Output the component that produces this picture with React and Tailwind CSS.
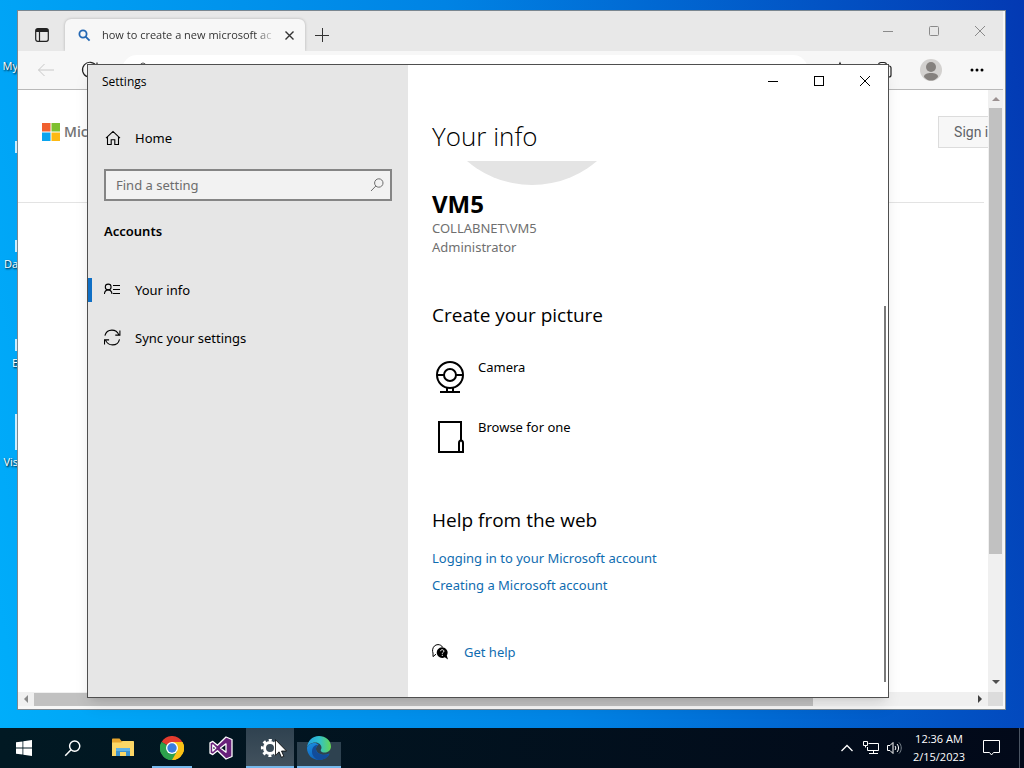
import { useState } from "react";
import clsx from "clsx";

const desktopIcons = [
  { label: "My", art: "" },
  { label: "", art: "h-3" },
  { label: "Da", art: "h-3" },
  { label: "E", art: "h-3" },
  { label: "Vis", art: "h-9" },
];

function Minimize() {
  return (
    <svg width="10" height="10" viewBox="0 0 10 10" stroke="currentColor" shapeRendering="crispEdges" aria-hidden="true">
      <path d="M0 5.5h10" />
    </svg>
  );
}

function Maximize({ radius = 0 }) {
  return (
    <svg width="10" height="10" viewBox="0 0 10 10" fill="none" stroke="currentColor" aria-hidden="true">
      <rect x=".5" y=".5" width="9" height="9" rx={radius} />
    </svg>
  );
}

function Close() {
  return (
    <svg width="10" height="10" viewBox="0 0 10 10" fill="none" stroke="currentColor" aria-hidden="true">
      <path d="M0 0l10 10M10 0L0 10" />
    </svg>
  );
}

function WindowControls({ className, radius }) {
  return (
    <div className={clsx("flex", className)}>
      <button type="button" aria-label="Minimize" className="grid h-full w-[46px] place-items-center">
        <Minimize />
      </button>
      <button type="button" aria-label="Maximize" className="grid h-full w-[46px] place-items-center">
        <Maximize radius={radius} />
      </button>
      <button type="button" aria-label="Close" className="grid h-full w-[46px] place-items-center">
        <Close />
      </button>
    </div>
  );
}

function HomeIcon() {
  return (
    <svg width="18" height="16" viewBox="0 0 18 16" fill="none" stroke="currentColor" strokeWidth="1.1" aria-hidden="true">
      <path d="M2 8.2L9 1.4l7 6.8M3.5 7v7.5h3.7V9.7h3.6v4.8h3.7V7" />
    </svg>
  );
}

function InfoIcon() {
  return (
    <svg width="18" height="16" viewBox="0 0 18 16" fill="none" stroke="currentColor" strokeWidth="1.1" aria-hidden="true">
      <circle cx="4.2" cy="5" r="2.900" />
      <path d="M.4 12c.3-2.600 1.700-4.100 3.800-4.100S7.700 9.400 8 12M9 3.500h7M9 7.500h7M9 11.500h7" />
    </svg>
  );
}

function SyncIcon() {
  return (
    <svg width="18" height="18" viewBox="0 0 18 18" fill="none" stroke="currentColor" strokeWidth="1.1" aria-hidden="true">
      <path d="M.9 6.700C1.700 3.300 4.500 1.100 7.900 1.100c3.200 0 5.800 1.900 7 4.800M15.900 1.500v4.600h-4.600M15.500 10.300c-.8 3.400-3.600 5.600-7 5.600-3.200 0-5.800-1.900-7-4.800M.5 15.500v-4.600h4.600" />
    </svg>
  );
}

function SearchGlass({ size = 14, strokeWidth = 1 }) {
  return (
    <svg width={size} height={size} viewBox="0 0 14 14" fill="none" stroke="currentColor" strokeWidth={strokeWidth} aria-hidden="true">
      <circle cx="8.800" cy="5" r="4.200" />
      <path d="M5.800 8L1 13" />
    </svg>
  );
}

function CameraIcon() {
  return (
    <svg width="36" height="40" viewBox="0 0 36 40" fill="none" stroke="currentColor" strokeWidth="2" aria-hidden="true">
      <circle cx="18" cy="18" r="13" />
      <circle cx="18" cy="18" r="6" />
      <path d="M5 18h7M24 18h7M15 31v4M21 31v4M8 35h20" />
    </svg>
  );
}

function BrowseIcon() {
  return (
    <svg width="36" height="40" viewBox="0 0 36 40" fill="none" stroke="currentColor" strokeWidth="2" aria-hidden="true">
      <path d="M29 24V5H7v30h20" />
      <path d="M27 35v-9c0-1.600.8-2.600 2-2.600s2 1 2 2.600v9z" />
    </svg>
  );
}

function HelpIcon() {
  return (
    <svg width="16" height="16" viewBox="0 0 16 16" fill="none" aria-hidden="true">
      <path d="M4 10.200L1 12.600V9C.6 8 .5 7 .6 5.800.9 2.800 3.200.6 6 .6c2 0 3.700 1 4.600 2.600" stroke="black" />
      <path d="M10.200 3.200a5.400 5.400 0 1 0 2.600 10.100L16 15.600l-1.200-4.200a5.400 5.400 0 0 0-4.600-8.200z" fill="black" />
      <path d="M8.500 7.200c.1-1 .8-1.500 1.700-1.500s1.700.6 1.700 1.500c0 1.200-1.600 1.200-1.600 2.500M10.300 10.800v1.100" stroke="white" />
    </svg>
  );
}

function Triangle({ className }) {
  return (
    <svg width="8" height="8" viewBox="0 0 8 8" fill="currentColor" className={className} aria-hidden="true">
      <path d="M0 6l4-4 4 4z" />
    </svg>
  );
}

function BrowserWindow() {
  return (
    <section aria-label="Browser" className="absolute top-2.5 right-[18px] bottom-[18px] left-[17px] flex flex-col border border-[#7b8790] bg-[#f7f7f7] pr-0.5 font-['Open_Sans',sans-serif]">
      <div className="flex h-10 shrink-0 items-end bg-[#e8e8e8]">
        <button type="button" aria-label="Tab actions" className="grid h-8 w-[47px] place-items-center text-[#222]">
          <svg width="14" height="14" viewBox="0 0 14 14" fill="none" stroke="currentColor" strokeWidth="1.200" aria-hidden="true">
            <rect x=".7" y=".7" width="12.600" height="12.600" rx="2" />
            <path d="M1 2.500h12" strokeWidth="3" />
            <path d="M4.500 3v10" />
          </svg>
        </button>
        <div className="flex h-8 w-60 items-center rounded-t-md bg-[#f7f7f7] pr-1 pl-3 shadow-[0_0_3px_rgba(0,0,0,0.25)] [clip-path:inset(-4px_-4px_0_-4px)]">
          <svg width="14" height="14" viewBox="0 0 14 14" fill="none" stroke="#2468b4" strokeWidth="1.800" className="shrink-0" aria-hidden="true">
            <circle cx="6" cy="6" r="3.600" />
            <path d="M8.600 8.600l4 4" />
          </svg>
          <span className="ml-[11px] w-[174px] overflow-hidden text-[11px] leading-4 whitespace-nowrap text-[#333] [mask-image:linear-gradient(to_right,black_88%,transparent)]">
            how to create a new microsoft ac
          </span>
          <button type="button" aria-label="Close tab" className="ml-auto grid size-6 shrink-0 place-items-center text-[#333]">
            <svg width="9" height="9" viewBox="0 0 9 9" stroke="currentColor" strokeWidth="1.400" aria-hidden="true">
              <path d="M.5.5l8 8M8.500.5l-8 8" />
            </svg>
          </button>
        </div>
        <button type="button" aria-label="New tab" className="grid h-8 w-[34px] place-items-center text-[#333]">
          <svg width="14" height="14" viewBox="0 0 14 14" stroke="currentColor" aria-hidden="true">
            <path d="M0 7.500h14M7.500 0v14" />
          </svg>
        </button>
        <WindowControls className="ml-auto h-full text-[#8a8a8a]" radius={1} />
      </div>

      <div className="flex h-[39px] shrink-0 items-center border-b border-[#b9b9b9] bg-[#f7f7f7] pr-[15px]">
        <button type="button" aria-label="Back" className="ml-4 grid size-6 place-items-center text-[#c8c8c8]">
          <svg width="18" height="14" viewBox="0 0 18 14" fill="none" stroke="currentColor" aria-hidden="true">
            <path d="M17 7H1.500M7.500 1l-6 6 6 6" />
          </svg>
        </button>
        <button type="button" aria-label="Refresh" className="ml-5 grid size-6 place-items-center text-[#222]">
          <svg width="18" height="18" viewBox="0 0 18 18" fill="none" stroke="currentColor" strokeWidth="1.200" aria-hidden="true">
            <path d="M15.500 5A7.500 7.500 0 1 0 16.500 9M16 1.500V5.500h-4" />
          </svg>
        </button>
        <div className="mr-5 ml-5 flex h-[30px] flex-1 items-center rounded-full bg-white px-3.5 text-[#555]">
          <svg width="14" height="18" viewBox="0 0 14 18" fill="none" stroke="currentColor" aria-hidden="true">
            <rect x="2" y="7" width="10" height="8" rx="1" />
            <path d="M4.500 7V4.500a2.500 2.500 0 0 1 5 0V7" />
          </svg>
        </div>
        <button type="button" aria-label="Favorites" className="grid size-6 place-items-center">
          <svg width="16" height="18" viewBox="0 0 16 18" fill="none" stroke="#222" strokeWidth="1.200" aria-hidden="true">
            <path d="M8 2l2 4.500 5 .5-3.800 3.300L12.400 15 8 12.500 3.600 15l1.200-4.700L1 7l5-.5z" />
          </svg>
        </button>
        <button type="button" aria-label="Collections" className="ml-5 grid size-6 place-items-center">
          <svg width="18" height="18" viewBox="0 0 18 18" fill="none" stroke="#222" strokeWidth="1.200" aria-hidden="true">
            <path d="M3.500 12.500V4a2.500 2.500 0 0 1 2.500-2.500h3A2.500 2.500 0 0 1 11.500 4" />
            <rect x="5" y="5" width="11" height="11" rx="2" />
            <path d="M10.500 8v5M8 10.500h5" />
          </svg>
        </button>
        <button type="button" aria-label="Profile" className="ml-6 grid size-[22px] place-items-center">
          <svg width="22" height="22" viewBox="0 0 22 22" aria-hidden="true">
            <circle cx="11" cy="11" r="11" fill="#d3d1cf" />
            <circle cx="11" cy="8" r="5" fill="#85817e" />
            <path d="M4 18c0-3 3-4 7-4s7 1 7 4c-2 2.500-4.300 3.600-7 3.600S6 20.500 4 18z" fill="#85817e" />
          </svg>
        </button>
        <button type="button" aria-label="More" className="ml-6 grid h-6 w-[22px] place-items-center">
          <svg width="14" height="4" viewBox="0 0 14 4" aria-hidden="true">
            <circle cx="2" cy="2" r="1.500" />
            <circle cx="7" cy="2" r="1.500" />
            <circle cx="12" cy="2" r="1.500" />
          </svg>
        </button>
      </div>

      <div className="flex min-h-0 flex-1">
        <div className="min-w-0 flex-1 overflow-hidden bg-white">
          <header className="mr-1 flex h-[113px] items-start border-b border-[#e3e3e3] pt-[26px] pl-6">
            <a href="#microsoft" className="flex h-8 items-center gap-1">
              <svg width="18" height="18" viewBox="0 0 18 18" aria-hidden="true">
                <path d="M0 0h8.500v8.500H0z" fill="#f0602f" />
                <path d="M9.500 0H18v8.500H9.500z" fill="#7fc02f" />
                <path d="M0 9.500h8.500V18H0z" fill="#0aa4ee" />
                <path d="M9.500 9.500H18V18H9.500z" fill="#fdb913" />
              </svg>
              <span className="text-sm font-semibold text-[#737373]">Microsoft</span>
            </a>
            <button type="button" className="-mr-7 ml-auto h-8 shrink-0 border border-[#dcdcdc] bg-[#f7f7f7] px-[15px] font-[Roboto,sans-serif] text-sm whitespace-nowrap text-[#5f6368]">
              Sign in
            </button>
          </header>
        </div>
        <div className="flex w-[15px] shrink-0 flex-col items-center bg-[#f0f0f0]">
          <Triangle className="my-[5px] shrink-0 text-[#9b9191]" />
          <div className="flex w-full flex-1 justify-center">
            <div className="h-[79%] w-[13px] bg-[#c1c1c1]" />
          </div>
          <Triangle className="my-[6px] shrink-0 rotate-180 text-[#505050]" />
        </div>
      </div>
      <div className="mb-[3px] flex h-[14px] shrink-0 items-center bg-[#f0f0f0]">
        <Triangle className="mx-1 shrink-0 -rotate-90 text-[#8a8a8a]" />
        <div className="h-[13px] flex-1">
          <div className="h-full w-[83%] bg-[#c1c1c1]" />
        </div>
        <Triangle className="mx-1 shrink-0 rotate-90 text-[#404040]" />
        <div className="h-full w-[15px] bg-[#dcdcdc]" />
      </div>
    </section>
  );
}

function NavItem({ icon, label, active, onClick }) {
  return (
    <button
      type="button"
      onClick={onClick}
      className="flex h-12 w-full items-center text-left text-black"
    >
      <span className={clsx("h-6 w-1", active && "bg-[#0f6fc5]")} />
      <span className="ml-3 grid w-[18px] place-items-center">{icon}</span>
      <span className="ml-[13px]">{label}</span>
    </button>
  );
}

function SettingsWindow() {
  const [page, setPage] = useState("info");

  return (
    <section aria-label="Settings" className="absolute top-16 right-[135px] bottom-[30px] left-[87px] flex overflow-hidden border border-[#4f4f4f] bg-white font-['Noto_Sans',sans-serif] text-[13px] leading-5 shadow-lg">
      <aside className="w-80 shrink-0 bg-[#e6e6e6]">
        <div className="flex h-[34px] items-center pl-3.5 font-['Open_Sans',sans-serif] text-xs text-black">Settings</div>
        <nav className="mt-[15px]">
          <NavItem icon={<HomeIcon />} label="Home" onClick={() => setPage("home")} />
          <div className="mx-4 mt-[7px] flex h-8 items-center border-2 border-[#858585] bg-[#f2f2f2] pr-1.5 pl-2.5">
            <input
              type="text"
              aria-label="Find a setting"
              placeholder="Find a setting"
              className="min-w-0 flex-1 bg-transparent outline-none placeholder:text-[#6d6d6d]"
            />
            <span className="text-[#6d6d6d]">
              <SearchGlass />
            </span>
          </div>
          <h2 className="mt-1.5 flex h-12 items-center pl-4 font-semibold text-black">Accounts</h2>
          <div className="mt-[11px]">
            <NavItem icon={<InfoIcon />} label="Your info" active={page === "info"} onClick={() => setPage("info")} />
            <NavItem icon={<SyncIcon />} label="Sync your settings" active={page === "sync"} onClick={() => setPage("sync")} />
          </div>
        </nav>
      </aside>

      <div className="relative flex min-w-0 flex-1 flex-col text-black">
        <WindowControls className="h-8 shrink-0 justify-end" />
        <h1 className="mt-5 pl-6 font-['Open_Sans',sans-serif] text-[26px] leading-[38px] font-light">Your info</h1>
        <div className="mt-1.5 min-h-0 flex-1 overflow-hidden px-6">
          <div className="flex h-6 items-end overflow-hidden">
            <div className="size-[200px] shrink-0 rounded-full bg-[#e4e4e4]" />
          </div>
          <p className="mt-1 font-['Open_Sans',sans-serif] text-2xl leading-[30px] font-bold">VM5</p>
          <p className="leading-[19px] text-[#6f6f6f]">COLLABNET\VM5</p>
          <p className="leading-[19px] text-[#6f6f6f]">Administrator</p>

          <h2 className="mt-11 font-['Open_Sans',sans-serif] text-[19px] leading-7">Create your picture</h2>
          <div className="mt-[18px]">
            <button type="button" className="flex h-15 items-start gap-2.5 pt-2.5">
              <CameraIcon />
              <span>Camera</span>
            </button>
            <button type="button" className="flex h-15 items-start gap-2.5 pt-2.5">
              <BrowseIcon />
              <span>Browse for one</span>
            </button>
          </div>

          <h2 className="mt-[39px] font-['Open_Sans',sans-serif] text-[19px] leading-7">Help from the web</h2>
          <ul className="mt-[11px] leading-[27px] text-[#0f6cb0]">
            <li>
              <a href="#logging-in">Logging in to your Microsoft account</a>
            </li>
            <li>
              <a href="#creating">Creating a Microsoft account</a>
            </li>
          </ul>
          <a href="#help" className="mt-[41px] flex h-6 w-fit items-center gap-4 text-[#0f6cb0]">
            <HelpIcon />
            Get help
          </a>
        </div>
        <div className="absolute right-0.5 bottom-[15px] h-[376px] w-0.5 bg-[#7a7a7a]" />
      </div>
    </section>
  );
}

function TaskButton({ label, className, children }) {
  return (
    <button type="button" aria-label={label} className={clsx("grid h-full w-12 place-items-center", className)}>
      {children}
    </button>
  );
}

function Taskbar() {
  return (
    <footer className="relative flex h-10 shrink-0 items-stretch bg-linear-to-r from-[#011923] to-[#020919] font-['Open_Sans',sans-serif] text-white">
      <TaskButton label="Start">
        <svg width="16" height="16" viewBox="0 0 16 16" fill="white" aria-hidden="true">
          <path d="M0 2.300l6.500-.9v6.200H0zM7.300 1.300L16 0v7.600H7.300zM0 8.400h6.500v6.200L0 13.700zM7.300 8.400H16V16l-8.700-1.300z" />
        </svg>
      </TaskButton>
      <TaskButton label="Search">
        <SearchGlass size={17} strokeWidth={1.2} />
      </TaskButton>
      <div className="ml-[3px] flex gap-px">
        <TaskButton label="File Explorer">
          <svg width="22" height="20" viewBox="0 0 22 20" aria-hidden="true">
            <path d="M0 1.500C0 1 .4.500 1 .5h6.500L9.500 3H21v3H0z" fill="#e7a52d" />
            <path d="M0 4.500h9l2-1.500h10c.6 0 1 .4 1 1v14H0z" fill="#fcd766" />
            <path d="M4 18v-7c0-.6.4-1 1-1h12c.6 0 1 .4 1 1v7h-4v-4H8v4z" fill="#3d93cf" />
            <path d="M4 13h14v-2c0-.6-.4-1-1-1H5c-.6 0-1 .4-1 1z" fill="#5fb2e6" />
          </svg>
        </TaskButton>
        <TaskButton label="Chrome" className="relative">
          <svg width="24" height="24" viewBox="0 0 24 24" aria-hidden="true">
            <path d="M12 12L1.600 6A12 12 0 0 1 22.400 6z" fill="#e33b2e" />
            <path d="M12 12L22.400 6A12 12 0 0 1 12 24z" fill="#fbc116" />
            <path d="M12 12v12A12 12 0 0 1 1.600 6z" fill="#2da14c" />
            <path d="M12 6h10.400A12 12 0 0 1 12 24l5.200-9z" fill="#fbc116" />
            <path d="M6.800 15L1.600 6A12 12 0 0 0 12 24l5.200-9z" fill="#2da14c" />
            <circle cx="12" cy="12" r="6" fill="white" />
            <circle cx="12" cy="12" r="4.700" fill="#3a7de0" />
          </svg>
          <span className="absolute inset-x-1 bottom-0 h-0.5 bg-[#76b9ed]" />
        </TaskButton>
        <TaskButton label="Visual Studio">
          <svg width="24" height="24" viewBox="0 0 24 24" fill="#68217a" stroke="white" strokeWidth="1.300" strokeLinejoin="round" aria-hidden="true">
            <path fillRule="evenodd" d="M17 1l6 2.500v17L17 23l-8.500-8.200-4.700 3.800L1 17.200V6.800l2.800-1.400 4.700 3.800zM17 7.800L11.500 12l5.500 4.200zM3.800 9v6l3-3z" />
          </svg>
        </TaskButton>
        <TaskButton label="Settings" className="relative bg-linear-to-b from-[#2f4250] to-[#43525e]">
          <svg width="20" height="20" viewBox="0 0 20 20" fill="none" stroke="white" aria-hidden="true">
            <circle cx="10" cy="10" r="5.500" strokeWidth="3" />
            <circle cx="10" cy="10" r="7.800" strokeWidth="2.600" strokeDasharray="3 3.126" strokeDashoffset="1.500" />
          </svg>
          <span className="absolute inset-x-0 bottom-0 h-0.5 bg-[#76b9ed]" />
        </TaskButton>
        <TaskButton label="Edge" className="relative">
          <span className="absolute inset-x-0.5 top-3.5 bottom-0 border-b-2 border-[#76b9ed] bg-[#2e4250]" />
          <svg width="24" height="24" viewBox="0 0 24 24" className="relative" aria-hidden="true">
            <defs>
              <linearGradient id="edgeTop" x1="0" y1=".5" x2="1" y2=".5">
                <stop offset="0" stopColor="#249fe0" />
                <stop offset=".5" stopColor="#2fc0cf" />
                <stop offset="1" stopColor="#65d654" />
              </linearGradient>
              <linearGradient id="edgeBody" x1="0" y1="0" x2=".6" y2="1">
                <stop offset="0" stopColor="#1b8fe0" />
                <stop offset="1" stopColor="#0d5cb6" />
              </linearGradient>
            </defs>
            <path d="M0 12C0 9 4 6.500 8.500 6.500c3.500 0 6 2.500 6 5.300 0 1.200-.8 1.800-.8 2.700 0 1.200 1.800 2.100 4 2.100 3.700 0 6.300-2.600 6.300-6C24 4.500 18.500 0 12 0 5 0 .3 5.500 0 12z" fill="url(#edgeTop)" />
            <path d="M0 12c0 7 5.500 12 12 12 4.600 0 8.500-2.500 10.300-5.800.3-.5-.1-.8-.6-.5C16 20.500 9 17.500 9 13c0-2.200 1.200-3.500 2.600-4.200C10.500 7.500 9 7 7.500 7 3.500 7 .4 9.500 0 12z" fill="url(#edgeBody)" />
            <path d="M9 13c0-2.200 1.200-3.500 2.600-4.200C7.500 8.500 5 12 5 15.500 5 20 8.500 23.500 12 24c4.600 0 8.500-2.500 10.300-5.800C16 20.500 9 17.500 9 13z" fill="#124c9a" />
          </svg>
        </TaskButton>
      </div>

      <div className="ml-auto flex items-center">
        <button type="button" aria-label="Show hidden icons" className="grid h-full w-6 place-items-center">
          <svg width="12" height="8" viewBox="0 0 12 8" fill="none" stroke="white" strokeWidth="1.300" aria-hidden="true">
            <path d="M.5 7L6 1.500 11.500 7" />
          </svg>
        </button>
        <button type="button" aria-label="Network" className="grid h-full w-6 place-items-center">
          <svg width="16" height="14" viewBox="0 0 16 14" fill="none" stroke="white" aria-hidden="true">
            <path d="M5.500 2.500h10v7h-11V6M.5.500h4v4h-4zM2.500 4.500v2M10.500 9.500v3M6 12.500h9" />
          </svg>
        </button>
        <button type="button" aria-label="Volume" className="grid h-full w-6 place-items-center">
          <svg width="16" height="14" viewBox="0 0 16 14" fill="none" stroke="white" aria-hidden="true">
            <path d="M.5 4.500h2.500l3-3v11l-3-3H.5zM8 5c1 1.200 1 2.800 0 4M10 3c2 2.300 2 5.700 0 8" />
            <path d="M12 1.500c3 3 3 8 0 11" stroke="#77818a" />
          </svg>
        </button>
        <time className="w-16 text-center text-[11px] leading-[18px]" dateTime="2023-02-15T00:36">
          12:36 AM
          <br />
          2/15/2023
        </time>
        <button type="button" aria-label="Notifications" className="mr-1 grid h-full w-11 place-items-center pr-1">
          <svg width="17" height="16" viewBox="0 0 17 16" fill="none" stroke="white" aria-hidden="true">
            <path d="M.5.500h16v12h-6l-2 2.500-2-2.500h-6z" />
          </svg>
        </button>
        <div className="h-full w-[5px] border-l border-[#4b5563]" />
      </div>

      <svg width="13" height="20" viewBox="0 0 13 20" className="absolute top-[11px] left-[275px]" aria-hidden="true">
        <path d="M.5.700v15.600l3.600-3.500 2.300 5.500 2.400-1-2.300-5.300h5z" fill="white" stroke="black" strokeWidth=".8" />
      </svg>
    </footer>
  );
}

export default function App() {
  return (
    <div className="flex h-screen flex-col overflow-hidden bg-[linear-gradient(80deg,#00aefb,#0083e4_50%,#0339b3)]">
      <main className="relative min-h-0 flex-1">
        <ul className="-mt-[25px] w-[18px] font-['Open_Sans',sans-serif] text-[11px] leading-4 text-white [text-shadow:1px_1px_2px_black]">
          {desktopIcons.map((icon, index) => (
            <li key={index} className="flex h-[99px] flex-col items-end justify-end">
              <span className={clsx("mr-px mb-1 w-0.5 bg-white/80", icon.art)} />
              <span className="h-4">{icon.label}</span>
            </li>
          ))}
        </ul>
        <BrowserWindow />
        <SettingsWindow />
      </main>
      <Taskbar />
    </div>
  );
}
